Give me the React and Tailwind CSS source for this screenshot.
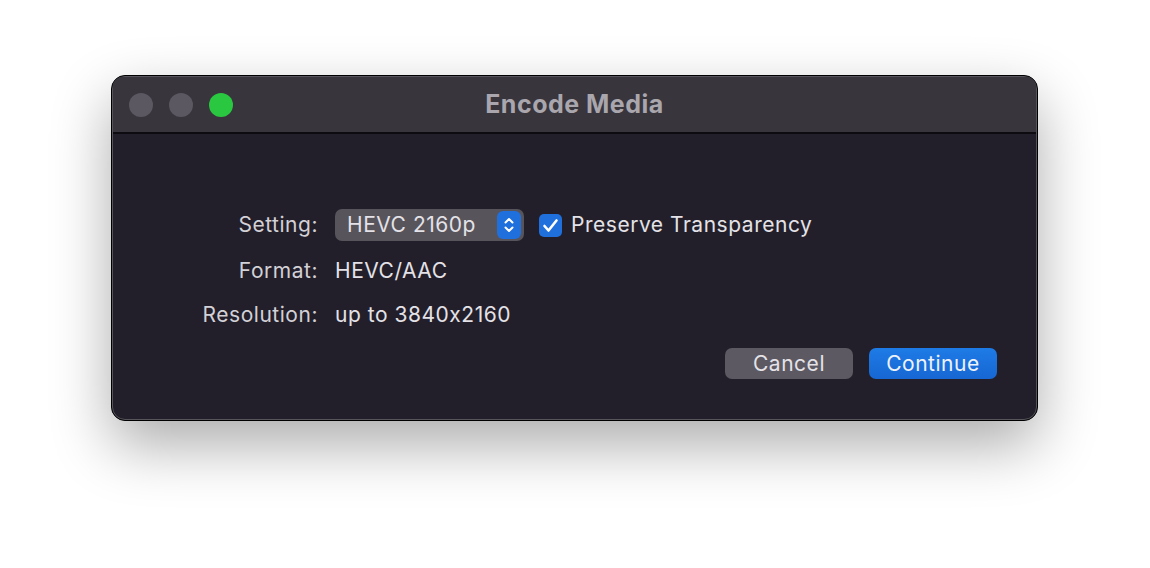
import React from 'react';

const font = { fontFamily: 'Inter, "Noto Sans", "Liberation Sans", sans-serif' };

function Stepper() {
  return (
    <span className="flex h-[28px] w-[24px] items-center justify-center rounded-[6px] bg-[#1f6fdc]">
      <svg width="12" height="18" viewBox="0 0 12 18" fill="none" stroke="white" strokeWidth="2" strokeLinecap="round" strokeLinejoin="round">
        <path d="M2.5 6.5 6 3l3.5 3.5" />
        <path d="M2.5 11.5 6 15l3.5-3.5" />
      </svg>
    </span>
  );
}

function Checkbox() {
  return (
    <span className="flex h-[23px] w-[23px] items-center justify-center rounded-[5px] bg-[#1f6fdc]">
      <svg width="17" height="15" viewBox="0 0 17 15" fill="none" stroke="white" strokeWidth="2.6" strokeLinecap="round" strokeLinejoin="round">
        <path d="M2.5 8 6.5 12.5 14.5 2.5" />
      </svg>
    </span>
  );
}

export default function App() {
  return (
    <div className="min-h-[568px] w-full bg-white pt-[75px] [font-feature-settings:'calt'_0]" style={font}>
      <div className="ml-[111px] w-[927px] overflow-hidden rounded-[14px] border border-black bg-[#221f2a] shadow-[0_24px_60px_rgba(0,0,0,0.33)]">
        <div className="rounded-[13px] border border-[#57545c]">
          {/* title bar */}
          <div className="relative flex h-[57px] items-center border-b-2 border-[#0d0b10] bg-[#38353d] px-[16px]">
            <div className="flex gap-[16px]">
              <span className="h-[24px] w-[24px] rounded-full bg-[#5b5861]" />
              <span className="h-[24px] w-[24px] rounded-full bg-[#5b5861]" />
              <span className="h-[24px] w-[24px] rounded-full bg-[#2ac840]" />
            </div>
            <div className="absolute inset-0 flex items-center justify-center text-[25px] font-bold tracking-[0.02em] text-[#a9a6ad]">
              Encode Media
            </div>
          </div>

          {/* body */}
          <div className="pb-[40px] pr-[39px] pt-[75px] text-[21px] tracking-[0.025em] text-[#e4e2e7]">
            <div className="grid grid-cols-[205px_1fr] gap-x-[17px]">
              <div className="flex h-[32px] items-center justify-end text-[#d3d1d6]">Setting:</div>
              <div className="flex h-[32px] items-center gap-[15px]">
                <div className="flex h-[32px] w-[189px] items-center justify-between rounded-[7px] bg-[#57545c] pl-[12px] pr-[3px]">
                  <span>HEVC 2160p</span>
                  <Stepper />
                </div>
                <div className="flex items-center gap-[9px]">
                  <Checkbox />
                  <span>Preserve Transparency</span>
                </div>
              </div>

              <div className="mt-[18px] flex h-[24px] items-center justify-end text-[#d3d1d6]">Format:</div>
              <div className="mt-[18px] flex h-[24px] items-center">HEVC/AAC</div>

              <div className="mt-[20px] flex h-[24px] items-center justify-end text-[#d3d1d6]">Resolution:</div>
              <div className="mt-[20px] flex h-[24px] items-center">up to 3840x2160</div>
            </div>

            <div className="mt-[21px] flex justify-end gap-[16px]">
              <button className="flex h-[31px] w-[128px] items-center justify-center rounded-[7px] bg-[#5c5962] text-[#e4e2e7]">
                Cancel
              </button>
              <button className="flex h-[31px] w-[128px] items-center justify-center rounded-[7px] bg-gradient-to-b from-[#1e7be6] to-[#1767d3] text-[#eef2fa]">
                Continue
              </button>
            </div>
          </div>
        </div>
      </div>
    </div>
  );
}
